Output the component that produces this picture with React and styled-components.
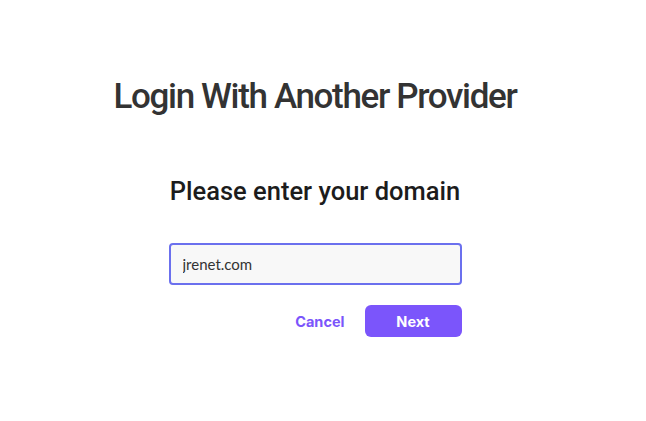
import React, { useState } from "react";
import styled, { createGlobalStyle } from "styled-components";

const GlobalStyle = createGlobalStyle`
  html, body {
    margin: 0;
    padding: 0;
    background: #fff;
  }
  body {
    font-family: Roboto, "Liberation Sans", sans-serif;
  }
`;

const Page = styled.main`
  width: 646px;
  height: 421px;
  box-sizing: border-box;
  padding: 75px 16px 0 0;
  display: flex;
  flex-direction: column;
  align-items: center;
`;

const Title = styled.h1`
  margin: 0;
  font-family: Roboto, sans-serif;
  font-weight: 500;
  font-size: 35px;
  line-height: 44px;
  letter-spacing: -1.35px;
  color: #333;
`;

const Form = styled.form`
  width: 293px;
  margin-top: 57px;
  display: flex;
  flex-direction: column;
`;

const Subtitle = styled.h2`
  margin: 0;
  text-align: center;
  white-space: nowrap;
  font-family: Roboto, sans-serif;
  font-weight: 500;
  font-size: 25.5px;
  line-height: 30px;
  color: #1c1c1c;
`;

const Input = styled.input`
  margin-top: 37px;
  height: 42px;
  box-sizing: border-box;
  padding: 0 12px;
  border: 2px solid #6b70ee;
  border-radius: 4px;
  background: #f8f8f8;
  font-family: Lato, sans-serif;
  font-size: 15px;
  color: #333;
  outline: none;
`;

const Actions = styled.div`
  margin-top: 20px;
  display: flex;
  justify-content: flex-end;
  align-items: center;
  gap: 20px;
`;

const Button = styled.button`
  height: 32px;
  width: ${(p) => (p.$primary ? "97px" : "auto")};
  padding: 0;
  border: none;
  border-radius: 6px;
  background: ${(p) => (p.$primary ? "#7b55fb" : "transparent")};
  color: ${(p) => (p.$primary ? "#fff" : "#7b55fb")};
  font-family: Inter, sans-serif;
  font-weight: 700;
  font-size: 14.5px;
  cursor: pointer;
`;

export default function App() {
  const [domain, setDomain] = useState("jrenet.com");

  return (
    <>
      <GlobalStyle />
      <Page>
        <Title>Login With Another Provider</Title>
        <Form onSubmit={(e) => e.preventDefault()}>
          <Subtitle>Please enter your domain</Subtitle>
          <Input value={domain} onChange={(e) => setDomain(e.target.value)} />
          <Actions>
            <Button type="button">Cancel</Button>
            <Button $primary type="submit">
              Next
            </Button>
          </Actions>
        </Form>
      </Page>
    </>
  );
}
